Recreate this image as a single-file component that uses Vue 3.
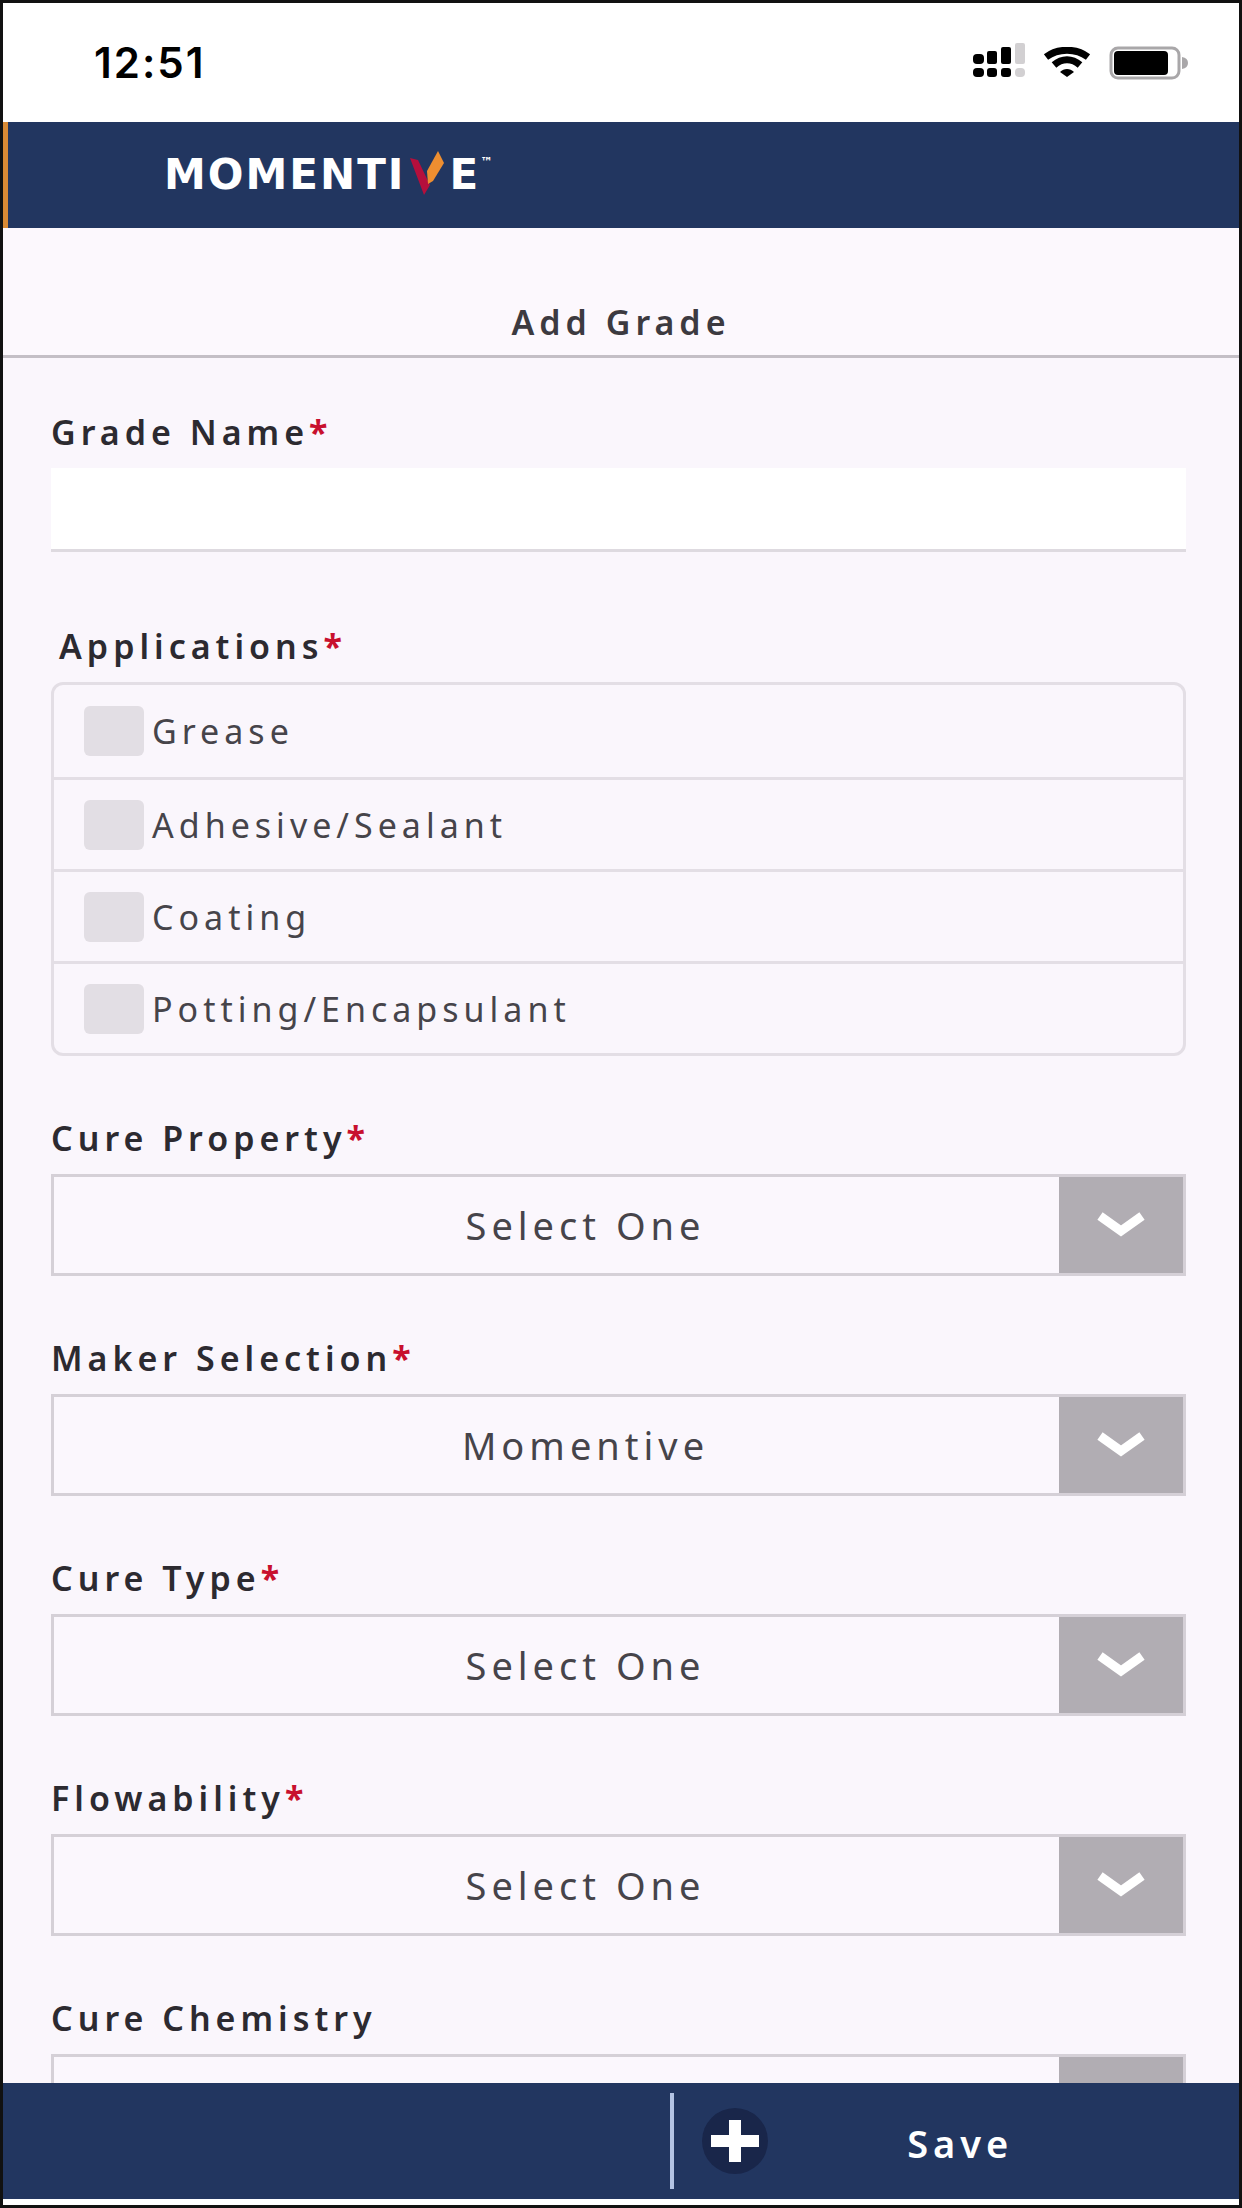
<script setup>
import { ref } from 'vue'

const gradeName = ref('')
const applications = ref([])
const applicationOptions = ['Grease', 'Adhesive/Sealant', 'Coating', 'Potting/Encapsulant']

const selects = ref([
  { id: 'cure-property', label: 'Cure Property', required: true, value: 'Select One' },
  { id: 'maker', label: 'Maker Selection', required: true, value: 'Momentive' },
  { id: 'cure-type', label: 'Cure Type', required: true, value: 'Select One' },
  { id: 'flowability', label: 'Flowability', required: true, value: 'Select One' },
  { id: 'cure-chemistry', label: 'Cure Chemistry', required: false, value: 'Select One' },
])
</script>

<template>
  <div class="screen">
    <div class="status">
      <span class="time">12:51</span>
      <div class="indicators">
        <svg width="52" height="40" viewBox="0 0 52 40" aria-hidden="true">
          <rect x="0" y="11" width="11" height="10" rx="4" />
          <rect x="14" y="8" width="10" height="13" rx="2" />
          <rect x="28" y="4" width="10" height="17" rx="2" />
          <rect x="42" y="0" width="10" height="21" rx="2" fill="#d2d0d2" />
          <rect x="0" y="25" width="11" height="9" rx="4" />
          <rect x="14" y="25" width="10" height="9" rx="3" />
          <rect x="28" y="25" width="10" height="9" rx="3" />
          <rect x="42" y="25" width="10" height="9" rx="4" fill="#d2d0d2" />
        </svg>
        <svg width="48" height="32" viewBox="0 0 48 32" aria-hidden="true">
          <path d="M3 10C15 1 33 1 45 10M11 18C19 11 29 11 37 18" fill="none" stroke="#000" stroke-width="7" />
          <path d="M24 30L17 25C21 21 27 21 31 25Z" />
        </svg>
        <svg width="80" height="34" viewBox="0 0 80 34" aria-hidden="true">
          <rect x="2" y="2" width="68" height="30" rx="7" fill="#fff" stroke="#a9a7a9" stroke-width="3" />
          <rect x="5" y="5" width="54" height="24" rx="4" />
          <path d="M73 11Q79 12 79 17Q79 22 73 23Z" fill="#a9a7a9" />
        </svg>
      </div>
    </div>

    <header class="brandbar">
      <div class="logo">
        <span>MOMENTI</span>
        <svg class="flame" width="36" height="46" viewBox="0 0 36 46" aria-hidden="true">
          <path d="M1 8L9 10L19 31L21 35L15 45Z" fill="#b50f3c" />
          <path d="M18 21L29 1L35 13L24 31L19 34Z" fill="#ee8e30" />
        </svg>
        <span>E</span>
        <span class="tm">™</span>
      </div>
    </header>

    <h1 class="title">Add Grade</h1>

    <form id="grade-form" class="form" @submit.prevent>
      <div class="field">
        <label class="label" for="grade-name">Grade Name<span class="star">*</span></label>
        <input id="grade-name" v-model="gradeName" class="text" type="text" />
      </div>

      <fieldset class="group">
        <legend class="label indented">Applications<span class="star">*</span></legend>
        <div class="options">
          <label v-for="option in applicationOptions" :key="option" class="option">
            <input v-model="applications" class="tick" type="checkbox" :value="option" />
            <span>{{ option }}</span>
          </label>
        </div>
      </fieldset>

      <div v-for="item in selects" :key="item.id" class="field">
        <label class="label" :for="item.id">{{ item.label }}<span v-if="item.required" class="star">*</span></label>
        <div class="picker">
          <select :id="item.id" v-model="item.value" class="select">
            <option>{{ item.value }}</option>
          </select>
          <span class="arrow">
            <svg width="48" height="28" viewBox="0 0 48 28" aria-hidden="true">
              <path d="M3 5L24 20L45 5" fill="none" stroke="#fff" stroke-width="9" />
            </svg>
          </span>
        </div>
      </div>
    </form>

    <footer class="actions">
      <button class="save" type="submit" form="grade-form">
        <svg width="68" height="68" viewBox="0 0 68 68" aria-hidden="true">
          <circle cx="34" cy="34" r="33" fill="#19264a" />
          <path d="M28 13H40V28H58V40H40V55H28V40H10V28H28Z" fill="#fff" />
        </svg>
        <span class="save-text">Save</span>
      </button>
    </footer>
  </div>
</template>

<style>
body {
  margin: 0;
  background: #fff;
}
</style>

<style scoped>
* {
  box-sizing: border-box;
}

.screen {
  display: flex;
  flex-direction: column;
  height: 100vh;
  overflow: hidden;
  border: 3px solid #111;
  padding-bottom: 6px;
  background: #fff;
  color: #2c2a30;
  font-family: "Noto Sans", "Open Sans", sans-serif;
  font-size: 34px;
  line-height: 40px;
  letter-spacing: 5px;
}

.status {
  flex: none;
  display: flex;
  justify-content: space-between;
  align-items: center;
  height: 119px;
  padding: 0 50px 0 91px;
}

.time {
  color: #000;
  font-family: Inter, sans-serif;
  font-size: 42px;
  font-weight: 600;
  letter-spacing: 2px;
}

.indicators {
  display: flex;
  align-items: center;
  gap: 18px;
}

.brandbar {
  flex: none;
  display: flex;
  align-items: center;
  height: 106px;
  padding-left: 156px;
  border-left: 5px solid #d98a35;
  background: #223660;
}

.logo {
  display: flex;
  align-items: center;
  color: #fff;
  font-family: "DejaVu Sans", sans-serif;
  font-size: 42px;
  font-weight: 700;
  letter-spacing: 2px;
}

.flame {
  margin: 0 4px 4px;
}

.tm {
  align-self: flex-start;
  font-size: 12px;
  line-height: 24px;
}

.title {
  flex: none;
  margin: 0;
  padding: 74px 0 13px;
  border-bottom: 3px solid #c4bfc6;
  background: #fcf8fd;
  color: #3c3a40;
  font-size: 34px;
  font-weight: 600;
  text-align: center;
}

.form {
  flex: 1;
  display: flex;
  flex-direction: column;
  gap: 62px;
  min-height: 0;
  overflow: hidden;
  padding: 54px 53px 0 48px;
  background: #faf6fc;
}

.field,
.group {
  flex: none;
}

.label {
  display: block;
  margin-bottom: 16px;
  padding: 0;
  font-weight: 600;
}

.indented {
  padding-left: 8px;
}

.star {
  color: #c8102e;
  font-weight: 700;
}

.text {
  display: block;
  width: 100%;
  height: 84px;
  border: 0;
  border-bottom: 3px solid #dedae0;
  border-radius: 0;
  padding: 0 24px;
  background: #fff;
  font: inherit;
}

.group {
  min-width: 0;
  margin: 12px 0 0;
  border: 0;
  padding: 0;
}

.options {
  border: 3px solid #e3dee5;
  border-radius: 12px;
  color: #46444a;
}

.option {
  display: flex;
  align-items: center;
  gap: 8px;
  height: 92px;
  padding-left: 30px;
}

.option + .option {
  border-top: 3px solid #e3dee5;
}

.tick {
  appearance: none;
  width: 60px;
  height: 50px;
  margin: 0;
  border-radius: 6px;
  background: #e2dee4;
}

.tick:checked {
  background: #223660;
}

.picker {
  display: grid;
  height: 102px;
  border: 3px solid #d5d0d7;
}

.select {
  grid-area: 1 / 1;
  appearance: none;
  width: 100%;
  border: 0;
  border-radius: 0;
  padding: 0 94px 0 28px;
  background: #fbf7fd;
  color: #46444a;
  font: inherit;
  font-size: 38px;
  letter-spacing: inherit;
  text-align: center;
  text-align-last: center;
}

.arrow {
  grid-area: 1 / 1;
  justify-self: end;
  display: flex;
  align-items: center;
  justify-content: center;
  width: 124px;
  background: #b1adb3;
  pointer-events: none;
}

.actions {
  flex: none;
  display: flex;
  justify-content: flex-end;
  padding: 10px 0;
  background: #223660;
}

.save {
  display: flex;
  align-items: center;
  width: 46%;
  height: 96px;
  border: 0;
  border-left: 4px solid #b3c3e3;
  padding: 0 0 0 27px;
  background: transparent;
  color: #fff;
  font: inherit;
  font-size: 38px;
  font-weight: 600;
  letter-spacing: inherit;
}

.save-text {
  flex: 1;
  padding: 4px 88px 0 0;
}
</style>
